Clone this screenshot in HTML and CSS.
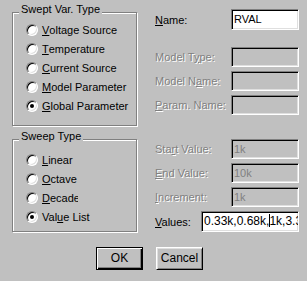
FILE: index.html
```html
<!DOCTYPE html>
<html>

<head>
    <meta charset='utf-8'>
    <title>Sweep</title>
    <link rel="stylesheet" href="styles.css">
</head>

<body>
    <div class="dialog">
        <div class="main">
            <div class="left">
                <div class="group group-var">
                    <span class="legend">Swept Var. Type</span>
                    <div class="radio-row"><span class="radio"></span><u>V</u>oltage Source</div>
                    <div class="radio-row"><span class="radio"></span><u>T</u>emperature</div>
                    <div class="radio-row"><span class="radio"></span><u>C</u>urrent Source</div>
                    <div class="radio-row"><span class="radio"></span><u>M</u>odel Parameter</div>
                    <div class="radio-row"><span class="radio checked"></span><u>G</u>lobal Parameter</div>
                </div>
                <div class="group group-sweep">
                    <span class="legend">Sweep Type</span>
                    <div class="radio-row"><span class="radio"></span><u>L</u>inear</div>
                    <div class="radio-row"><span class="radio"></span><u>O</u>ctave</div>
                    <div class="radio-row"><span class="radio"></span><span class="clip"><u>D</u>ecade</span></div>
                    <div class="radio-row"><span class="radio checked"></span>Val<u>u</u>e List</div>
                </div>
            </div>

            <div class="right">
                <div class="form-row row-name">
                    <label class="lbl"><u>N</u>ame:</label>
                    <div class="box box-name">RVAL</div>
                </div>

                <div class="form-group group-model">
                    <div class="form-row">
                        <label class="lbl disabled">Model T<u>y</u>pe:</label>
                        <div class="box box-off"></div>
                    </div>
                    <div class="form-row">
                        <label class="lbl disabled">Model N<u>a</u>me:</label>
                        <div class="box box-off"></div>
                    </div>
                    <div class="form-row">
                        <label class="lbl disabled"><u>P</u>aram. Name:</label>
                        <div class="box box-off"></div>
                    </div>
                </div>

                <div class="form-group group-values">
                    <div class="form-row">
                        <label class="lbl disabled">Sta<u>r</u>t Value:</label>
                        <div class="box box-off">1k</div>
                    </div>
                    <div class="form-row">
                        <label class="lbl disabled"><u>E</u>nd Value:</label>
                        <div class="box box-off">10k</div>
                    </div>
                    <div class="form-row">
                        <label class="lbl disabled"><u>I</u>ncrement:</label>
                        <div class="box box-off">1k</div>
                    </div>
                    <div class="form-row row-values">
                        <label class="lbl lbl-short"><u>V</u>alues:</label>
                        <div class="box box-values">0.33k,0.68k,<span class="caret"></span>1k,3.3k,6.8k</div>
                    </div>
                </div>
            </div>
        </div>

        <div class="buttons">
            <div class="btn btn-default">OK</div>
            <div class="btn">Cancel</div>
        </div>
    </div>
</body>

</html>
```

FILE: styles.css
```css
body {
    margin: 0;
    height: 100vh;
    overflow: hidden;
    background-color: #c0c0c0;
    font-family: "Liberation Sans", Arial, sans-serif;
    font-size: 11px;
    color: #000;
}

u {
    text-decoration: underline;
    text-underline-offset: 1px;
}

.main {
    display: flex;
}

.left {
    margin-left: 12px;
    margin-top: 12px;
    width: 125px;
}

.group {
    position: relative;
    box-sizing: border-box;
    border: 1px solid #808080;
    box-shadow: inset 1px 1px #fff, 1px 1px #fff;
    padding-left: 13px;
}

.group-var {
    height: 114px;
    padding-top: 7px;
}

.group-sweep {
    height: 93px;
    margin-top: 13px;
    padding-top: 10px;
}

.legend {
    position: absolute;
    left: 6px;
    top: -10px;
    padding: 0 2px;
    line-height: 13px;
    background-color: #c0c0c0;
}

.radio-row {
    display: flex;
    align-items: center;
    height: 19px;
    white-space: nowrap;
}

.radio {
    position: relative;
    box-sizing: border-box;
    width: 12px;
    height: 12px;
    margin-right: 4px;
    border: 1px solid;
    border-color: #808080 #fff #fff #808080;
    border-radius: 50%;
    box-shadow: inset 1px 1px #000, inset -1px -1px #dfdfdf;
    background-color: #fff;
}

.radio.checked::after {
    content: "";
    position: absolute;
    left: 3px;
    top: 3px;
    width: 4px;
    height: 4px;
    border-radius: 50%;
    background-color: #000;
}

.clip {
    display: inline-block;
    width: 36px;
    overflow: hidden;
}

.right {
    margin-left: 18px;
    padding-top: 9px;
}

.form-row {
    display: flex;
    align-items: center;
}

.form-group {
    display: flex;
    flex-direction: column;
    gap: 4px;
}

.group-model {
    margin-top: 17px;
}

.group-values {
    margin-top: 24px;
}

.lbl {
    width: 76px;
    white-space: nowrap;
}

.lbl-short {
    width: 46px;
}

.disabled {
    color: #808080;
    text-shadow: 1px 1px 0 #fff;
}

.box {
    box-sizing: border-box;
    width: 68px;
    height: 20px;
    padding: 0 2px;
    line-height: 18px;
    border: 1px solid;
    border-color: #808080 #fff #fff #808080;
    box-shadow: inset 1px 1px #000, inset -1px -1px #dfdfdf;
    white-space: nowrap;
    overflow: hidden;
}

.box-name {
    height: 21px;
    line-height: 19px;
    background-color: #fff;
}

.box-off {
    color: #808080;
}

.box-values {
    width: 98px;
    height: 21px;
    line-height: 19px;
    padding-left: 2px;
    background-color: #fff;
    font-size: 12px;
}

.caret {
    display: inline-block;
    width: 1px;
    height: 13px;
    margin-right: -1px;
    vertical-align: -2px;
    background-color: #000;
}

.buttons {
    display: flex;
    gap: 13px;
    margin-top: 15px;
    padding-left: 96px;
}

.btn {
    box-sizing: border-box;
    width: 47px;
    height: 23px;
    line-height: 21px;
    text-align: center;
    font-size: 12px;
    border: 1px solid;
    border-color: #fff #000 #000 #fff;
    box-shadow: inset 1px 1px #dfdfdf, inset -1px -1px #808080;
}

.btn-default {
    border-color: #000;
    line-height: 21px;
    box-shadow: inset 1px 1px #fff, inset -1px -1px #000, inset -2px -2px #808080;
}
```
